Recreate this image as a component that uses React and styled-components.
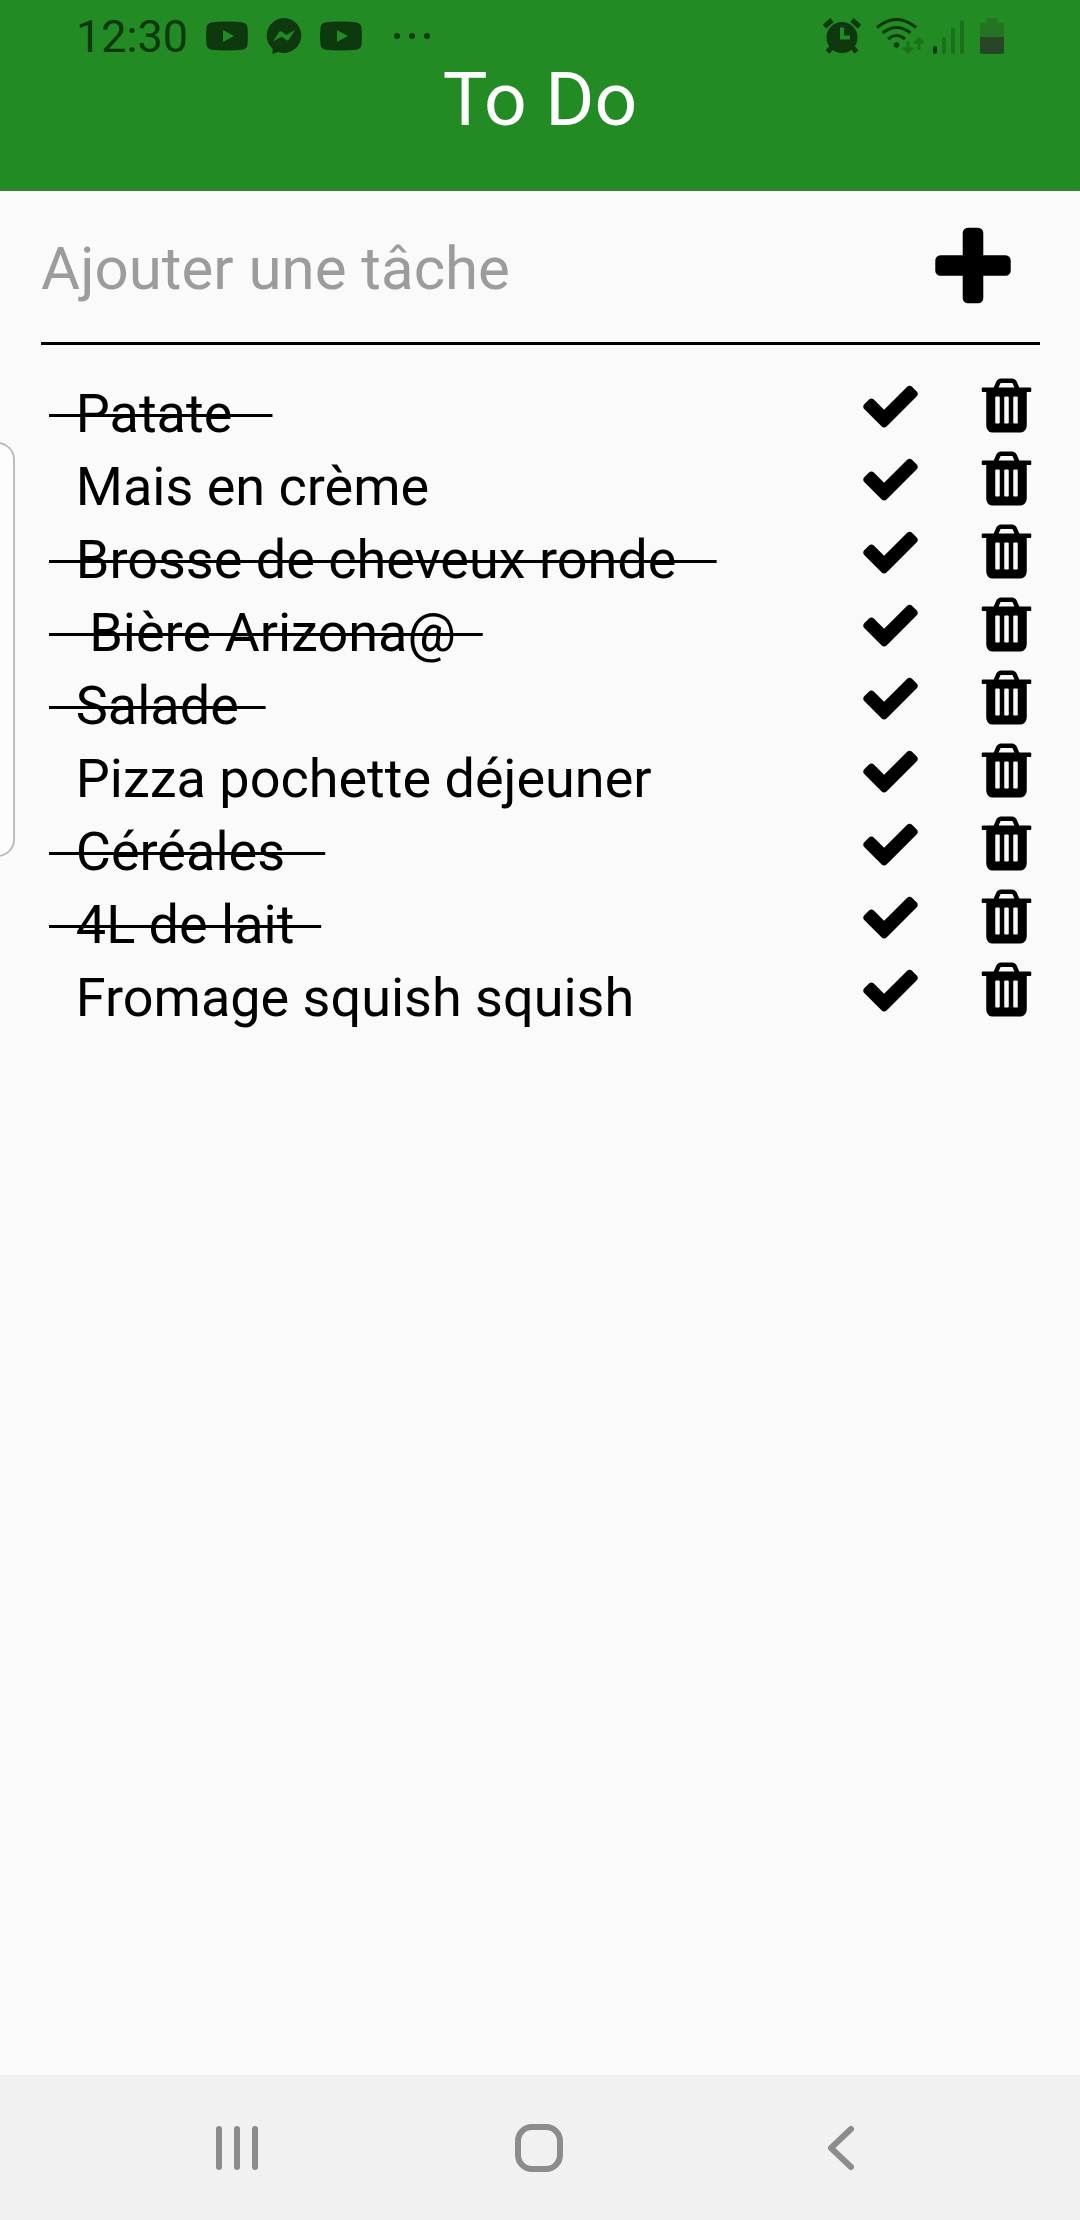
import React, { useState } from "react";
import styled, { createGlobalStyle } from "styled-components";

const GlobalStyle = createGlobalStyle`
  *, *::before, *::after { box-sizing: border-box; }
  body { margin: 0; background: #fafafa; font-family: Roboto, "Noto Sans", sans-serif; }
`;

const Screen = styled.div`
  display: flex;
  flex-direction: column;
  min-height: 100vh;
  background: #fafafa;
  color: #000;
`;

const Header = styled.header`
  background: #238b23;
  border-bottom: 1px solid #3f7f3f;
  padding-bottom: 44px;
`;

const StatusBar = styled.div`
  display: flex;
  align-items: center;
  justify-content: space-between;
  height: 53px;
  padding: 18px 76px 0 76px;
  color: #0e380e;
`;

const StatusGroup = styled.div`
  display: flex;
  align-items: center;
  gap: ${(p) => p.$gap}px;
`;

const Overflow = styled.span`
  display: flex;
  margin-left: 14px;
`;

const Clock = styled.time`
  padding-top: 2px;
  font-size: 45px;
  line-height: 42px;
`;

const Title = styled.h1`
  margin: 0;
  font-size: 75px;
  line-height: 93px;
  font-weight: 400;
  text-align: center;
  color: #fff;
`;

const Main = styled.main`
  flex: 1;
  padding: 0 40px 0 41px;
`;

const AddForm = styled.form`
  display: flex;
  align-items: center;
  height: 154px;
  padding: 5px 19px 0 0;
  border-bottom: 3px solid #000;
`;

const TaskInput = styled.input`
  flex: 1;
  min-width: 0;
  padding: 0;
  border: 0;
  outline: 0;
  background: transparent;
  font: 400 60px/72px Roboto, "Noto Sans", sans-serif;
  color: #000;
  &::placeholder { color: #9c9c9c; opacity: 1; }
`;

const IconButton = styled.button`
  display: flex;
  flex: none;
  padding: 0;
  border: 0;
  background: transparent;
  color: inherit;
  cursor: pointer;
`;

const TaskList = styled.ul`
  margin: 0;
  padding: 29px 2px 0 8px;
  list-style: none;
`;

const Task = styled.li`
  display: flex;
  align-items: flex-start;
  height: 73px;
`;

const TaskText = styled.span`
  flex: 1;
  padding-top: 6px;
  font-size: 54px;
  line-height: 68px;
  white-space: pre;
`;

const TaskLabel = styled.span`
  text-decoration: ${(p) => (p.$done ? "line-through 3px" : "none")};
`;

const Actions = styled.div`
  display: flex;
  gap: 53px;
`;

const EdgeHandle = styled.div`
  position: fixed;
  top: 442px;
  left: -20px;
  width: 35px;
  height: 415px;
  border: 2px solid #bcbcbc;
  border-radius: 18px;
  background: #fdfdfd;
`;

const NavBar = styled.nav`
  display: flex;
  height: 145px;
  padding: 0 88px 0 86px;
  background: #f1f1f1;
`;

const NavButton = styled.button`
  flex: 1;
  display: flex;
  align-items: center;
  justify-content: center;
  padding: 0;
  border: 0;
  background: transparent;
  color: #8c8c8c;
  cursor: pointer;
`;

const YoutubeIcon = () => (
  <svg width="42" height="30" viewBox="0 0 42 30" aria-hidden="true">
    <path fill="currentColor" fillRule="evenodd" d="M6 1.200Q21-.4 36 1.200Q41 2 41.500 6.500Q42.300 15 41.500 23.500Q41 28 36 28.800Q21 30.400 6 28.800Q1 28 .5 23.500Q-.3 15 .5 6.500Q1 2 6 1.200ZM17 9V21L28 15Z" />
  </svg>
);

const MessengerIcon = () => (
  <svg width="36" height="36" viewBox="0 0 36 36" aria-hidden="true">
    <path fill="currentColor" fillRule="evenodd" d="M18 0A17.500 17.500 0 1 1 12 34L6.500 36V30.500A17.500 17.500 0 0 1 18 0ZM7 23.500L13 14Q14 12.800 15.500 13.500L20.500 17L29 12L23 21.500Q22 23 20.500 22L15.500 18.800Z" />
  </svg>
);

const MoreIcon = () => (
  <svg width="36" height="6" viewBox="0 0 36 6" fill="currentColor" aria-hidden="true">
    <circle cx="3" cy="3" r="3" />
    <circle cx="18" cy="3" r="3" />
    <circle cx="33" cy="3" r="3" />
  </svg>
);

const AlarmIcon = () => (
  <svg width="38" height="36" viewBox="0 0 38 36" aria-hidden="true">
    <circle cx="19" cy="19.500" r="15.500" fill="currentColor" />
    <path d="M1.500 8.500L9 2M36.500 8.500L29 2" stroke="currentColor" strokeWidth="5" />
    <path d="M9 29L4.500 34M29 29L33.500 34" stroke="currentColor" strokeWidth="5" />
    <path d="M19 9.500V19.500H27" fill="none" stroke="#238b23" strokeWidth="4" />
  </svg>
);

const WifiIcon = () => (
  <svg width="48" height="36" viewBox="0 0 48 36" fill="none" aria-hidden="true">
    <g stroke="currentColor" strokeWidth="3">
      <path d="M1 9.500Q20.500-6.500 40 9.500" />
      <path d="M6.500 15Q20.500 4 34.500 15" />
      <path d="M12 21Q20.500 14 29 21" />
    </g>
    <circle cx="20.500" cy="27" r="2.700" fill="currentColor" />
    <path d="M32 23.500V34M27.500 29.500L32 34L36.500 29.500M43 32V21M38.500 25.500L43 21L47.500 25.500" stroke="#1b701b" strokeWidth="3" />
  </svg>
);

const SignalIcon = () => (
  <svg width="32" height="36" viewBox="0 0 32 36" fill="none" strokeWidth="4" strokeLinecap="round" aria-hidden="true">
    <path d="M2 30V34" stroke="currentColor" />
    <path d="M11 21V34M20 12V34M29 4V34" stroke="#1b701b" />
  </svg>
);

const BatteryIcon = () => (
  <svg width="24" height="36" viewBox="0 0 24 36" aria-hidden="true">
    <path d="M0 19V7Q0 5 2 5H6.500V0H17.500V5H22Q24 5 24 7V19Z" fill="#247424" />
    <path d="M0 19H24V34Q24 36 22 36H2Q0 36 0 34Z" fill="#264626" />
  </svg>
);

const PlusIcon = () => (
  <svg width="96" height="96" viewBox="0 0 1792 1792" fill="currentColor" aria-hidden="true">
    <path d="M1600 736v192q0 40-28 68t-68 28h-416v416q0 40-28 68t-68 28h-192q-40 0-68-28t-28-68v-416h-416q-40 0-68-28t-28-68v-192q0-40 28-68t68-28h416v-416q0-40 28-68t68-28h192q40 0 68 28t28 68v416h416q40 0 68 28t28 68z" />
  </svg>
);

const CheckIcon = () => (
  <svg width="63" height="63" viewBox="0 0 1792 1792" fill="currentColor" aria-hidden="true">
    <path d="M1671 566q0 40-28 68l-724 724-136 136q-28 28-68 28t-68-28l-136-136-362-362q-28-28-28-68t28-68l136-136q28-28 68-28t68 28l294 295 656-657q28-28 68-28t68 28l136 136q28 28 28 68z" />
  </svg>
);

const TrashIcon = () => (
  <svg width="63" height="63" viewBox="0 0 1792 1792" fill="currentColor" aria-hidden="true">
    <path d="M704 1376v-704q0-14-9-23t-23-9h-64q-14 0-23 9t-9 23v704q0 14 9 23t23 9h64q14 0 23-9t9-23zm256 0v-704q0-14-9-23t-23-9h-64q-14 0-23 9t-9 23v704q0 14 9 23t23 9h64q14 0 23-9t9-23zm256 0v-704q0-14-9-23t-23-9h-64q-14 0-23 9t-9 23v704q0 14 9 23t23 9h64q14 0 23-9t9-23zm-544-992h448l-48-117q-7-9-17-11h-317q-10 2-17 11zm928 32v64q0 14-9 23t-23 9h-96v948q0 83-47 143.500t-113 60.500h-832q-66 0-113-58.500t-47-141.500v-952h-96q-14 0-23-9t-9-23v-64q0-14 9-23t23-9h309l70-167q15-37 54-63t79-26h320q40 0 79 26t54 63l70 167h309q14 0 23 9t9 23z" />
  </svg>
);

const RecentsIcon = () => (
  <svg width="44" height="46" viewBox="0 0 44 46" stroke="currentColor" strokeWidth="6" strokeLinecap="round" aria-hidden="true">
    <path d="M4 4V42M22 4V42M40 4V42" />
  </svg>
);

const HomeIcon = () => (
  <svg width="48" height="48" viewBox="0 0 48 48" fill="none" stroke="currentColor" strokeWidth="6" aria-hidden="true">
    <rect x="3" y="3" width="42" height="42" rx="14" />
  </svg>
);

const BackIcon = () => (
  <svg width="28" height="46" viewBox="0 0 28 46" fill="none" stroke="currentColor" strokeWidth="6" strokeLinecap="round" strokeLinejoin="round" aria-hidden="true">
    <path d="M24 4L4 23L24 42" />
  </svg>
);

const initialTasks = [
  { text: "  Patate   ", done: true },
  { text: "  Mais en crème ", done: false },
  { text: "  Brosse de cheveux ronde   ", done: true },
  { text: "   Bière Arizona@  ", done: true },
  { text: "  Salade  ", done: true },
  { text: "  Pizza pochette déjeuner ", done: false },
  { text: "  Céréales   ", done: true },
  { text: "  4L de lait  ", done: true },
  { text: "  Fromage squish squish ", done: false },
];

export default function App() {
  const [tasks, setTasks] = useState(initialTasks);
  const [draft, setDraft] = useState("");

  const addTask = (event) => {
    event.preventDefault();
    if (!draft.trim()) return;
    setTasks([...tasks, { text: `  ${draft}  `, done: false }]);
    setDraft("");
  };
  const toggleTask = (index) =>
    setTasks(tasks.map((task, i) => (i === index ? { ...task, done: !task.done } : task)));
  const removeTask = (index) => setTasks(tasks.filter((_, i) => i !== index));

  return (
    <>
      <GlobalStyle />
      <Screen>
        <Header>
          <StatusBar>
            <StatusGroup $gap={18}>
              <Clock>12:30</Clock>
              <YoutubeIcon />
              <MessengerIcon />
              <YoutubeIcon />
              <Overflow>
                <MoreIcon />
              </Overflow>
            </StatusGroup>
            <StatusGroup $gap={15}>
              <AlarmIcon />
              <StatusGroup $gap={9}>
                <WifiIcon />
                <SignalIcon />
              </StatusGroup>
              <BatteryIcon />
            </StatusGroup>
          </StatusBar>
          <Title>To Do</Title>
        </Header>
        <Main>
          <AddForm onSubmit={addTask}>
            <TaskInput
              aria-label="Ajouter une tâche"
              placeholder="Ajouter une tâche"
              value={draft}
              onChange={(event) => setDraft(event.target.value)}
            />
            <IconButton type="submit" aria-label="Ajouter">
              <PlusIcon />
            </IconButton>
          </AddForm>
          <TaskList>
            {tasks.map((task, index) => (
              <Task key={index}>
                <TaskText>
                  <TaskLabel $done={task.done}>{task.text}</TaskLabel>
                </TaskText>
                <Actions>
                  <IconButton type="button" aria-label="Terminer" onClick={() => toggleTask(index)}>
                    <CheckIcon />
                  </IconButton>
                  <IconButton type="button" aria-label="Supprimer" onClick={() => removeTask(index)}>
                    <TrashIcon />
                  </IconButton>
                </Actions>
              </Task>
            ))}
          </TaskList>
        </Main>
        <NavBar>
          <NavButton type="button" aria-label="Applications récentes">
            <RecentsIcon />
          </NavButton>
          <NavButton type="button" aria-label="Accueil">
            <HomeIcon />
          </NavButton>
          <NavButton type="button" aria-label="Retour">
            <BackIcon />
          </NavButton>
        </NavBar>
      </Screen>
      <EdgeHandle />
    </>
  );
}
